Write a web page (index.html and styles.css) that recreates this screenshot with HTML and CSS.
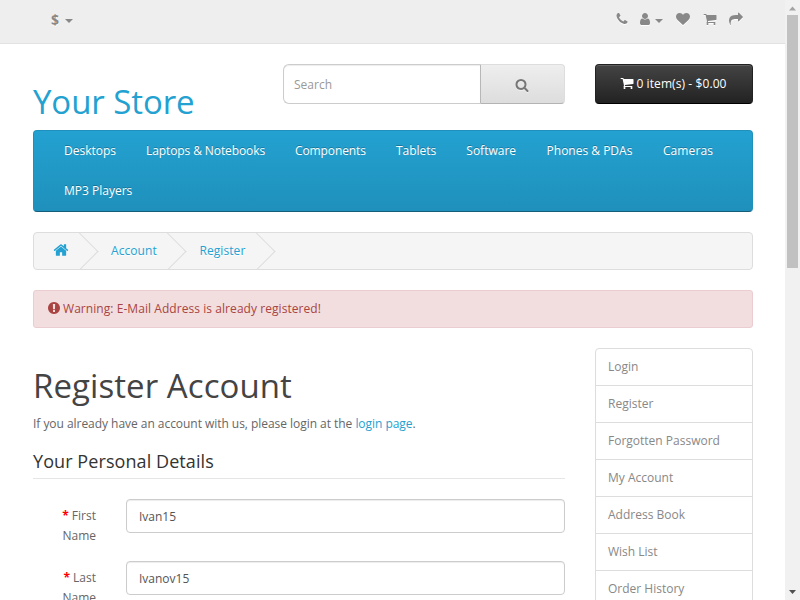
FILE: index.html
```html
<!DOCTYPE html>
<html lang="en">
<head>
<meta charset="utf-8">
<title>Register Account</title>
<link rel="stylesheet" href="styles.css">
</head>
<body>
<svg class="sprite" aria-hidden="true">
<symbol id="phone" viewBox="0 0 1792 1792"><path d="M1600 1240q0 27-10 70.500t-21 68.500q-21 50-122 106-94 51-186 51-27 0-53-3.500t-57.500-12.500-47-14.500-55.500-20.500-49-18q-98-35-175-83-127-79-264-216t-216-264q-48-77-83-175-3-9-18-49t-20.500-55.500-14.500-47-12.500-57.500-3.500-53q0-92 51-186 56-101 106-122 25-11 68.500-21t70.500-10q14 0 21 3 18 6 53 76 11 19 30 54t35 63.500 31 53.500q3 4 17.500 25t21.500 35.500 7 28.500q0 20-28.500 50t-62 55-62 53-28.500 46q0 9 5 22.500t8.500 20.500 14 24 11.500 19q76 137 174 235t235 174q2 1 19 11.500t24 14 20.500 8.500 22.500 5q18 0 46-28.500t53-62 55-62 50-28.500q14 0 28.500 7t35.500 21.500 25 17.500q25 15 53.500 31t63.500 35 54 30q70 35 76 53 3 7 3 21z"/></symbol>
<symbol id="user" viewBox="0 0 1792 1792"><path d="M1536 1399q0 109-62.500 187t-150.500 78h-854q-88 0-150.500-78t-62.500-187q0-85 8.500-160.500t31.500-152 58.500-131 94-89 134.500-34.500q131 128 313 128t313-128q76 0 134.500 34.500t94 89 58.500 131 31.500 152 8.500 160.500zm-256-887q0 159-112.500 271.500t-271.500 112.500-271.500-112.500-112.500-271.500 112.500-271.500 271.500-112.500 271.500 112.500 112.500 271.500z"/></symbol>
<symbol id="heart" viewBox="0 0 1792 1792"><path d="M896 1664q-26 0-44-18l-624-602q-10-8-27.500-26t-55.500-65.500-68-97.500-53.500-121-23.500-138q0-220 127-344t351-124q62 0 126.500 21.500t120 58 95.500 68.500 76 68q36-36 76-68t95.500-68.500 120-58 126.500-21.500q224 0 351 124t127 344q0 221-229 450l-623 600q-18 18-44 18z"/></symbol>
<symbol id="cart" viewBox="0 0 1792 1792"><path d="M704 1536q0 52-38 90t-90 38-90-38-38-90 38-90 90-38 90 38 38 90zm896 0q0 52-38 90t-90 38-90-38-38-90 38-90 90-38 90 38 38 90zm128-1088v512q0 24-16.500 42.500t-40.500 21.500l-1044 122q13 60 13 70 0 16-24 64h920q26 0 45 19t19 45-19 45-45 19h-1024q-26 0-45-19t-19-45q0-11 8-31.500t16-36 21.500-40 15.500-29.500l-177-823h-204q-26 0-45-19t-19-45 19-45 45-19h256q16 0 28.500 6.500t19.500 15.500 13 24.500 8 26 5.500 29.500 4.500 26h1201q26 0 45 19t19 45z"/></symbol>
<symbol id="share" viewBox="0 0 1792 1792"><path d="M1792 640q0 26-19 45l-512 512q-19 19-45 19t-45-19-19-45v-256h-224q-98 0-175.500 6t-154 21.500-133 42.500-105.500 69.500-80 101-48.500 138.500-17.500 181q0 55 5 123 0 6 2.500 23.500t2.500 26.500q0 15-8.500 25t-23.500 10q-16 0-28-17-7-9-13-22t-13.500-30-10.500-24q-127-285-127-451 0-199 53-333 162-403 875-403h224v-256q0-26 19-45t45-19 45 19l512 512q19 19 19 45z"/></symbol>
<symbol id="search" viewBox="0 0 1792 1792"><path d="M1216 832q0-185-131.500-316.500t-316.500-131.500-316.500 131.500-131.500 316.500 131.500 316.500 316.500 131.500 316.500-131.500 131.500-316.500zm512 832q0 52-38 90t-90 38q-54 0-90-38l-343-342q-179 124-399 124-143 0-273.500-55.500t-225-150-150-225-55.500-273.500 55.500-273.500 150-225 225-150 273.500-55.500 273.500 55.500 225 150 150 225 55.500 273.500q0 220-124 399l343 343q37 37 37 90z"/></symbol>
<symbol id="home" viewBox="0 0 1792 1792"><path d="M1472 992v480q0 26-19 45t-45 19h-384v-384h-256v384h-384q-26 0-45-19t-19-45v-480q0-1 .5-3t.5-3l575-474 575 474q1 2 1 6zm223-69l-62 74q-8 9-21 11h-3q-13 0-21-7l-692-577-692 577q-12 8-24 7-13-2-21-11l-62-74q-8-10-7-23.500t11-21.500l719-599q32-26 76-26t76 26l244 204v-195q0-14 9-23t23-9h192q14 0 23 9t9 23v408l219 182q10 8 11 21.500t-7 23.500z"/></symbol>
<symbol id="alert" viewBox="0 0 1792 1792"><path d="M896 128q209 0 385.500 103t279.500 279.500 103 385.500-103 385.500-279.500 279.500-385.500 103-385.500-103-279.500-279.500-103-385.500 103-385.500 279.500-279.500 385.500-103zm128 1247v-190q0-14-9-23.500t-22-9.500h-192q-13 0-23 10t-10 23v190q0 13 10 23t23 10h192q13 0 22-9.500t9-23.500zm-2-344l18-621q0-12-10-18-10-8-24-8h-220q-14 0-24 8-10 6-10 18l17 621q0 10 10 17.500t24 7.500h185q14 0 23.500-7.500t10.500-17.500z"/></symbol>
</svg>
<div class="window">
<div class="page">
  <nav class="top">
    <div class="container top-row">
      <div class="currency"><strong>$</strong><span class="caret"></span></div>
      <div class="top-links">
        <svg class="icon phone"><use href="#phone"/></svg>
        <span class="account"><svg class="icon"><use href="#user"/></svg><span class="caret"></span></span>
        <svg class="icon"><use href="#heart"/></svg>
        <svg class="icon"><use href="#cart"/></svg>
        <svg class="icon"><use href="#share"/></svg>
      </div>
    </div>
  </nav>
  <div class="container">
    <header class="header">
      <h1 class="logo"><a href="#">Your Store</a></h1>
      <div class="search">
        <input type="text" placeholder="Search">
        <button type="button"><svg class="icon"><use href="#search"/></svg></button>
      </div>
      <button type="button" class="cart"><svg class="icon"><use href="#cart"/></svg><span>0 item(s) - $0.00</span></button>
    </header>
    <nav class="menu">
      <a href="#">Desktops</a><a href="#" class="tight">Laptops &amp; Notebooks</a><a href="#" class="tight">Components</a><a href="#">Tablets</a><a href="#">Software</a><a href="#">Phones &amp; PDAs</a><a href="#" class="wide">Cameras</a><a href="#">MP3 Players</a>
    </nav>
    <ul class="breadcrumb">
      <li><a href="#"><svg class="icon"><use href="#home"/></svg></a></li>
      <li><a href="#">Account</a></li>
      <li><a href="#">Register</a></li>
    </ul>
    <div class="alert"><svg class="icon"><use href="#alert"/></svg><span>Warning: E-Mail Address is already registered!</span></div>
    <div class="columns">
      <main class="content">
        <h1>Register Account</h1>
        <p>If you already have an account with us, please login at the <a href="#">login page</a>.</p>
        <h2 class="legend">Your Personal Details</h2>
        <div class="group"><label for="first"><b>*</b> First Name</label><input id="first" type="text" value="Ivan15"></div>
        <div class="group"><label for="last"><b>*</b> Last Name</label><input id="last" type="text" value="Ivanov15"></div>
      </main>
      <aside class="list">
        <a href="#">Login</a><a href="#">Register</a><a href="#">Forgotten Password</a><a href="#">My Account</a><a href="#">Address Book</a><a href="#">Wish List</a><a href="#">Order History</a>
      </aside>
    </div>
  </div>
</div>
<div class="scrollbar">
  <svg class="arrow" viewBox="0 0 15 15"><path d="M4 10.500L7.500 6.500L11 10.500z" fill="#a3a3a3"/></svg>
  <div class="thumb"></div>
  <svg class="arrow" viewBox="0 0 15 15"><path d="M4 5L11 5L7.500 9z" fill="#505050"/></svg>
</div>
</div>
</body>
</html>
```
FILE: styles.css
```css
* { box-sizing: border-box; }
html, body { height: 100%; margin: 0; overflow: hidden; }
body {
  font: 400 12px/20px "Open Sans", sans-serif;
  color: #666;
  background: #fff;
}
a { color: #23a1d1; text-decoration: none; }
input, button { font-family: inherit; margin: 0; }
.sprite { display: none; }
.icon { display: block; width: 14px; height: 14px; fill: currentColor; flex: none; overflow: visible; }
.window { display: flex; height: 600px; overflow: hidden; }
.page { width: 785px; height: 600px; overflow: hidden; }
.container { width: 720px; margin: 0 0 0 33px; }

.top { height: 44px; background: #eee; border-bottom: 1px solid #e2e2e2; color: #888; }
.top-row { display: flex; justify-content: space-between; }
.currency { display: flex; align-items: center; padding: 10px 0 0 18px; font-size: 14px; text-shadow: 0 1px 0 #fff; }
.currency .caret { margin: 2px 0 0 6px; }
.caret { width: 0; height: 0; border: 4px solid transparent; border-top-color: currentColor; border-bottom: 0; }
.top-links { display: flex; padding: 12px 10px 0 0; gap: 12.500px; }
.top-links .icon { filter: drop-shadow(0 1px 0 #fff); }
.top-links .phone { margin-right: -3px; }
.account { display: flex; }
.account .caret { margin: 7px .5px 0 3px; }

.header { display: flex; height: 86px; padding-top: 20px; }
.logo { width: 250px; margin: 20px 0 0; font-weight: 400; font-size: 33px; line-height: 36px; letter-spacing: -.08px; }
.search { display: flex; width: 282px; height: 40px; }
.search input {
  width: 198px; height: 40px; padding: 0 10px; font-size: 12px; line-height: 20px;
  border: 1px solid #ccc; border-right: 0; border-radius: 6px 0 0 6px;
  box-shadow: inset 0 1px 1px rgba(0,0,0,.075); outline: 0; background: #fff;
}
.search input::placeholder { color: #999; }
.search button {
  display: flex; align-items: center; justify-content: center; width: 85px; height: 40px; padding: 2px 1px 0 0;
  border: 1px solid; border-color: #ddd #ddd #b3b3b3 #b7b7b7; border-radius: 0 4px 4px 0;
  background: linear-gradient(#eee, #ddd); color: #777;
}
.search .icon { filter: drop-shadow(0 1px 0 rgba(255,255,255,.5)); }
.cart {
  display: flex; justify-content: center; align-items: center; gap: 2px; width: 158px; height: 40px; margin-left: 30px; padding: 0 1px 0 0;
  color: #fff; font-size: 12px; line-height: 20px; letter-spacing: .09px; border: 1px solid; border-color: #222 #222 #000;
  border-radius: 4px; background: linear-gradient(#444, #222);
  box-shadow: inset 0 1px 0 rgba(255,255,255,.15);
}
.cart .icon { margin-top: -2px; }

.menu {
  display: flex; flex-wrap: wrap; height: 82px; padding: 0 15px;
  border: 1px solid; border-color: #1f90bb #1f90bb #145e7a; border-radius: 4px;
  background: linear-gradient(#23a1d1, #1f90bb);
}
.menu a { height: 40px; padding: 10px 15px; color: #fff; text-shadow: 0 -1px 0 rgba(0,0,0,.25); }
.menu .tight { letter-spacing: -.1px; }
.menu .wide { letter-spacing: .12px; }
.menu a:nth-child(6) { padding-right: 15.500px; padding-left: 15.500px; }

.breadcrumb {
  display: flex; height: 38px; margin: 20px 0; padding: 0; list-style: none; overflow: hidden;
  border: 1px solid #ddd; border-radius: 4px; background: #f5f5f5;
}
.breadcrumb li { position: relative; padding: 8px 19px 0 19px; text-shadow: 0 1px 0 #fff; }
.breadcrumb li + li { padding-left: 23px; padding-right: 19.600px; letter-spacing: .08px; }
.breadcrumb .icon { width: 16px; height: 16px; margin-top: 1px; }
.breadcrumb li::after {
  content: ""; position: absolute; top: 5px; right: -5px; width: 26px; height: 26px;
  border: 1px solid #ddd; border-width: 1px 1px 0 0; transform: rotate(45deg);
}

.alert {
  display: flex; height: 38px; padding: 8px 13px; gap: 2px; letter-spacing: .06px;
  color: #a94442; background: #f2dede; border: 1px solid #ebccd1; border-radius: 3px;
}
.alert .icon { margin-top: 2px; }
.columns { display: flex; gap: 30px; margin-top: 20px; }
.content { width: 532px; }
.content h1 { margin: 20px 0 10px; font-size: 33px; font-weight: 400; line-height: 36px; letter-spacing: .07px; color: #444; }
.content p { margin: 0 0 10px; letter-spacing: -.04px; }
.legend { height: 35px; margin: 0 0 20px; padding-top: 7px; font-size: 18px; font-weight: 400; line-height: 20px; letter-spacing: .08px; color: #333; border-bottom: 1px solid #e5e5e5; }
.group { display: flex; height: 62px; }
.group label { width: 63px; padding-top: 7px; margin-right: 30px; padding-left: 13px; text-align: right; }
.group b { color: #f00; }
.group input {
  width: 439px; height: 34px; padding: 6px 12px; font-size: 12px; color: #555;
  background: #fff; border: 1px solid #ccc; border-radius: 4px; box-shadow: inset 0 1px 1px rgba(0,0,0,.075);
}
.list { width: 158px; border: 1px solid #ddd; border-radius: 4px; }
.list a { display: block; height: 37px; padding: 8px 12px; color: #888; border-bottom: 1px solid #ddd; }

.scrollbar { display: flex; flex-direction: column; width: 15px; height: 600px; background: #f1f1f1; }
.arrow { width: 15px; height: 15px; flex: none; }
.thumb { width: 11px; height: 253px; margin: 0 2px auto; background: #c1c1c1; }
```
